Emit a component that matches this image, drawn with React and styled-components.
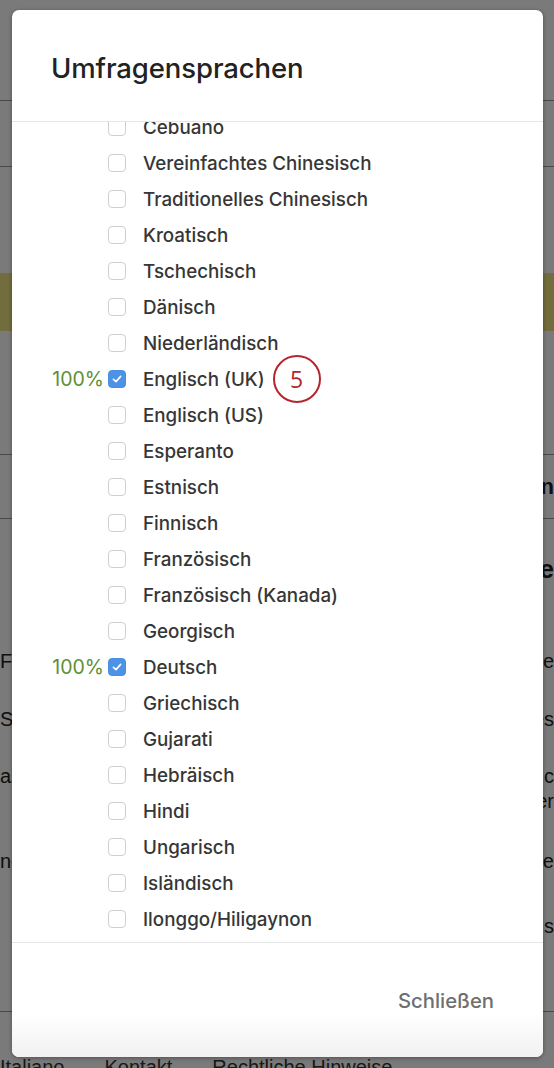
import React from 'react';
import styled, { createGlobalStyle } from 'styled-components';

const GlobalStyle = createGlobalStyle`
  html, body {
    margin: 0;
    padding: 0;
    background: #ffffff;
  }
  body {
    font-family: Inter, 'Liberation Sans', Arial, sans-serif;
  }
`;

const LANGUAGES = [
  { name: 'Cebuano' },
  { name: 'Vereinfachtes Chinesisch' },
  { name: 'Traditionelles Chinesisch' },
  { name: 'Kroatisch' },
  { name: 'Tschechisch' },
  { name: 'Dänisch' },
  { name: 'Niederländisch' },
  { name: 'Englisch (UK)', progress: '100%', checked: true, callout: '5' },
  { name: 'Englisch (US)' },
  { name: 'Esperanto' },
  { name: 'Estnisch' },
  { name: 'Finnisch' },
  { name: 'Französisch' },
  { name: 'Französisch (Kanada)' },
  { name: 'Georgisch' },
  { name: 'Deutsch', progress: '100%', checked: true },
  { name: 'Griechisch' },
  { name: 'Gujarati' },
  { name: 'Hebräisch' },
  { name: 'Hindi' },
  { name: 'Ungarisch' },
  { name: 'Isländisch' },
  { name: 'Ilonggo/Hiligaynon' },
  { name: 'Indonesisch' },
  { name: 'Italienisch' },
];

/* page behind the dialog */

const Page = styled.div`
  position: relative;
  width: 554px;
  height: 1068px;
  overflow: hidden;
  background: #fff;
  color: #333;
`;

const PageBand = styled.div`
  height: ${({ h }) => h}px;
  background: ${({ bg }) => bg || 'transparent'};
  border-bottom: ${({ line }) => (line ? '1px solid #999' : 'none')};
`;

const PageRow = styled.div`
  display: flex;
  justify-content: space-between;
  align-items: center;
  height: ${({ h }) => h}px;
  font-family: 'Liberation Sans', Arial, sans-serif;
  font-size: ${({ size }) => size || 20}px;
  font-weight: ${({ bold }) => (bold ? 700 : 400)};
  color: #222;
  white-space: nowrap;
  border-bottom: ${({ line }) => (line ? '1px solid #999' : 'none')};
  box-sizing: border-box;
`;

const PageFooter = styled.div`
  display: flex;
  gap: 40px;
  font-family: 'Liberation Sans', Arial, sans-serif;
  font-size: 20px;
  color: #333;
  white-space: nowrap;
`;

const Overlay = styled.div`
  position: absolute;
  inset: 0;
  background: rgba(0, 0, 0, 0.52);
`;

/* dialog */

const Dialog = styled.div`
  position: absolute;
  left: 12px;
  top: 10px;
  width: 531px;
  height: 1047px;
  display: flex;
  flex-direction: column;
  background: #fff;
  border-radius: 7px;
  box-shadow: 0 1px 4px rgba(0, 0, 0, 0.35);
  overflow: hidden;
`;

const Header = styled.div`
  flex: 0 0 112px;
  display: flex;
  align-items: center;
  padding: 0 39px;
  border-bottom: 1px solid #e6e6e6;
  box-sizing: border-box;
`;

const Title = styled.h1`
  margin: 0;
  padding-top: 4px;
  font-size: 27.5px;
  font-weight: 500;
  letter-spacing: -0.1px;
  color: #222;
`;

const Body = styled.div`
  flex: 1;
  overflow: hidden;
`;

const List = styled.ul`
  list-style: none;
  margin: -13px 0 0;
  padding: 0;
`;

const Row = styled.li`
  display: grid;
  grid-template-columns: 57px 18px max-content 1fr;
  grid-template-rows: 36px;
  align-items: center;
  padding-left: 39px;
`;

const Progress = styled.span`
  justify-self: end;
  padding-right: 4px;
  font-size: 19.5px;
  font-weight: 400;
  color: #5e8f32;
`;

const Box = styled.span`
  width: 18px;
  height: 18px;
  box-sizing: border-box;
  border-radius: 4px;
  border: 1px solid ${({ checked }) => (checked ? '#4a8fe0' : '#cfcfcf')};
  background: ${({ checked }) => (checked ? '#4d92e4' : '#fff')};
  display: flex;
  align-items: center;
  justify-content: center;
`;

const Label = styled.span`
  padding-left: 17px;
  font-size: 18.8px;
  font-weight: 500;
  color: #363636;
  white-space: nowrap;
`;

const Callout = styled.span`
  justify-self: start;
  margin: -12px 0 -12px 8px;
  width: 48px;
  height: 48px;
  box-sizing: border-box;
  border: 2.5px solid #b3262d;
  border-radius: 50%;
  display: flex;
  align-items: center;
  justify-content: center;
  font-family: 'Open Sans', 'Liberation Sans', sans-serif;
  font-size: 23px;
  color: #b3262d;
  background: #fff;
`;

const Footer = styled.div`
  flex: 0 0 115px;
  display: flex;
  align-items: center;
  justify-content: flex-end;
  padding: 0 49px 0 0;
  border-top: 1px solid #e6e6e6;
  box-sizing: border-box;
  background: linear-gradient(to bottom, #fff 0, #fff 70px, #f1f1f1 115px);
`;

const CloseButton = styled.button`
  border: 0;
  background: transparent;
  padding: 0;
  margin-top: 1px;
  font-family: Inter, 'Liberation Sans', Arial, sans-serif;
  font-size: 20.3px;
  font-weight: 500;
  color: #6f6f6f;
  cursor: pointer;
`;

const Check = () => (
  <svg width="12" height="12" viewBox="0 0 12 12" fill="none">
    <path d="M2.5 6.3 L5 8.7 L9.6 3.4" stroke="#fff" strokeWidth="1.7" strokeLinecap="round" strokeLinejoin="round" />
  </svg>
);

export default function App() {
  return (
    <>
      <GlobalStyle />
      <Page>
        <PageBand h={100} line />
        <PageBand h={65} line />
        <PageBand h={106} />
        <PageBand h={58} bg="#ece37f" />
        <PageBand h={123} line />
        <PageRow h={64} size={22} bold line>
          <span />
          <span>n</span>
        </PageRow>
        <PageRow h={100} size={26} bold>
          <span />
          <span>e</span>
        </PageRow>
        <PageRow h={84}>
          <span>F</span>
          <span>e</span>
        </PageRow>
        <PageRow h={32}>
          <span>S</span>
          <span>es</span>
        </PageRow>
        <PageBand h={26} />
        <PageRow h={30}>
          <span>as</span>
          <span>c</span>
        </PageRow>
        <PageRow h={20}>
          <span />
          <span>er</span>
        </PageRow>
        <PageBand h={35} />
        <PageRow h={30}>
          <span>nc</span>
          <span>ne</span>
        </PageRow>
        <PageBand h={35} />
        <PageRow h={30}>
          <span />
          <span>s</span>
        </PageRow>
        <PageBand h={70} line />
        <PageBand h={44} />
        <PageFooter>
          <span>Italiano</span>
          <span>Kontakt</span>
          <span>Rechtliche Hinweise</span>
        </PageFooter>
        <Overlay />
        <Dialog role="dialog" aria-label="Umfragensprachen">
          <Header>
            <Title>Umfragensprachen</Title>
          </Header>
          <Body>
            <List>
              {LANGUAGES.map(lang => (
                <Row key={lang.name}>
                  <Progress>{lang.progress}</Progress>
                  <Box checked={lang.checked}>{lang.checked && <Check />}</Box>
                  <Label>{lang.name}</Label>
                  {lang.callout ? <Callout>{lang.callout}</Callout> : <span />}
                </Row>
              ))}
            </List>
          </Body>
          <Footer>
            <CloseButton>Schließen</CloseButton>
          </Footer>
        </Dialog>
      </Page>
    </>
  );
}
